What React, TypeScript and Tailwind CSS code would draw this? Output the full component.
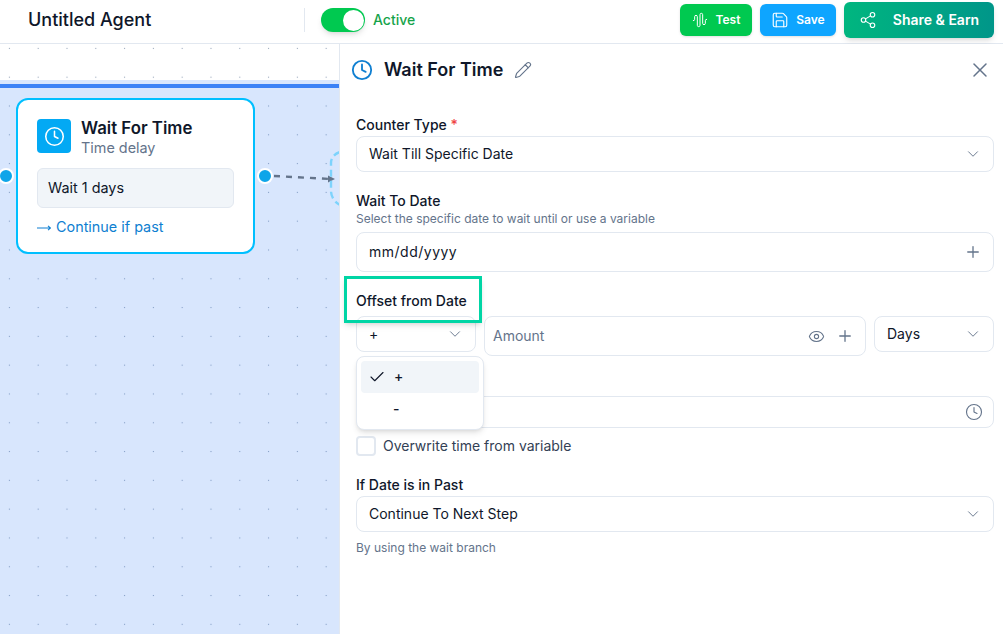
import {AudioWaveform, Check, ChevronDown, Clock, Eye, Pencil, Plus, Save, Share2, X} from "lucide-react";

function SelectBox({value, className = ""}: {value: string; className?: string}) {
  return (
    <div className={`flex h-9 items-center justify-between rounded-lg border border-[#e2e8f0] bg-white pl-3 pr-[11px] text-sm text-[#0f172a] ${className}`}>
      <span>{value}</span>
      <ChevronDown size={18} strokeWidth={1.25} className="text-[#64748b]"/>
    </div>
  )
}

function Header() {
  return (
    <header className="flex h-11 shrink-0 items-center border-b border-[#e2e8f0] bg-white pb-[3px] pl-7 pr-[9px]">
      <h1 className="w-[276px] text-lg font-medium text-[#0f172a]">Untitled Agent</h1>
      <div className="h-6 w-px bg-[#e2e8f0]"/>
      <div className="ml-4 flex h-6 w-11 items-center justify-end rounded-full bg-[#00c950] pr-px shadow-md">
        <div className="size-[21px] rounded-full bg-white"/>
      </div>
      <span className="ml-2 text-sm font-medium text-[#16a34a]">Active</span>
      <div className="ml-auto flex items-center gap-2">
        <button className="flex h-8 w-[72px] items-center justify-center gap-2 rounded-md bg-[#00c950] text-xs font-semibold text-white shadow-sm">
          <AudioWaveform size={16} strokeWidth={1.5}/>
          Test
        </button>
        <button className="flex h-8 w-[76px] items-center justify-center gap-[7px] rounded-md bg-[#0ea5ff] text-xs font-semibold text-white shadow-sm">
          <Save size={18} strokeWidth={1.5}/>
          Save
        </button>
        <button className="flex h-9 w-[150px] items-center justify-center gap-4 rounded-md bg-gradient-to-r from-[#00b67f] to-[#009689] text-sm font-semibold text-white shadow-md">
          <Share2 size={18} strokeWidth={1.5}/>
          Share &amp; Earn
        </button>
      </div>
    </header>
  )
}

function Handle({className}: {className: string}) {
  return <div className={`absolute size-4 rounded-full border-2 border-white bg-[#0ea5e9] ${className}`}/>
}

function Canvas() {
  return (
    <section className="relative w-[340px] shrink-0 overflow-hidden border-r border-[#e2e8f0] bg-white bg-[radial-gradient(circle,#94a3b8_0.8px,transparent_1px)] bg-[size:28.8px_28.8px] bg-[position:-5px_-10px]">
      <div className="mt-9 h-full bg-[#3b82f6]/20 pt-1">
        <div className="h-1 bg-[#3b82f6]"/>
        <div className="relative ml-4 mt-[10px] h-[156px] w-[239px] rounded-xl border-2 border-[#00bfff] bg-white px-[19px] pt-[19px]">
          <div className="flex h-[34px] items-center gap-[10px]">
            <div className="flex size-[34px] items-center justify-center rounded bg-[#03a9f4] text-white">
              <Clock size={21} strokeWidth={1.75}/>
            </div>
            <div className="mt-[3px]">
              <div className="text-[16.8px] leading-5 font-semibold text-[#0f172a]">Wait For Time</div>
              <div className="text-[14.4px] leading-5 text-[#64748b]">Time delay</div>
            </div>
          </div>
          <div className="mt-[15px] flex h-10 items-center rounded-md border border-[#e2e8f0] bg-[#f1f5f9] px-[10px] text-[14.4px] text-[#0f172a]">
            Wait 1 days
          </div>
          <div className="mt-[9px] flex items-center text-[14.4px] leading-5 text-[#0f7fd1]">
            <svg width="14" height="8" viewBox="0 0 14 8" fill="none" stroke="currentColor" strokeWidth="1.1" className="mr-[5px] mt-px">
              <path d="M0 4H13.5M11 1.8L13.5 4L11 6.2"/>
            </svg>
            Continue if past
          </div>
          <Handle className="left-[-20px] top-[68px]"/>
          <Handle className="right-[-20px] top-[68px]"/>
        </div>
      </div>
      <svg className="absolute left-[270px] top-[105px]" width="70" height="60" viewBox="0 0 70 60" fill="none">
        <path d="M4 27 L60 30" stroke="#64748b" strokeWidth="2.4" strokeDasharray="6 6"/>
        <path d="M65 30 L58 26.5 V33.5 Z" fill="#64748b"/>
        <path d="M70 3 C64 5 61 9 61 14 V42 C61 47 64 53 70 56" stroke="#7dd3fc" strokeWidth="2.4" strokeDasharray="7 4"/>
      </svg>
    </section>
  )
}

function FieldLabel({children}: {children: React.ReactNode}) {
  return <label className="block text-sm leading-5 font-medium text-[#0f172a]">{children}</label>
}

function Panel() {
  return (
    <section className="relative flex-1 bg-white pl-4 pr-[9px]">
      <div className="-ml-[5px] flex h-[51px] items-center">
        <Clock size={22} strokeWidth={2} className="text-[#0f7fd1]"/>
        <h2 className="ml-[11px] text-lg font-semibold text-[#0f172a]">Wait For Time</h2>
        <Pencil size={18} strokeWidth={1.5} className="ml-[11px] text-[#64748b]"/>
        <X size={24} strokeWidth={1.5} className="ml-auto mr-[2px] text-[#64748b]"/>
      </div>

      <div className="mt-5">
        <FieldLabel>Counter Type <span className="text-[#ef4444]">*</span></FieldLabel>
        <SelectBox value="Wait Till Specific Date" className="mt-[1px]"/>
      </div>

      <div className="mt-[19px]">
        <FieldLabel>Wait To Date</FieldLabel>
        <p className="text-xs leading-4 text-[#64748b]">Select the specific date to wait until or use a variable</p>
        <div className="mt-[5px] flex h-10 items-center justify-between rounded-lg border border-[#e2e8f0] pl-3 pr-[11px] text-sm tracking-[0.5px] text-[#0f172a]">
          mm/dd/yyyy
          <Plus size={18} strokeWidth={1.75} className="text-[#64748b]"/>
        </div>
      </div>

      <div className="mt-[19px]">
        <FieldLabel>Offset from Date</FieldLabel>
        <div className="relative mt-[5px] flex items-start gap-2">
          <SelectBox value="+" className="w-[120px]"/>
          <div className="flex h-10 flex-1 items-center rounded-lg border border-[#e2e8f0] pl-2 pr-[11px] text-sm text-[#64748b]">
            Amount
            <Eye size={17} strokeWidth={1.5} className="ml-auto"/>
            <Plus size={18} strokeWidth={1.75} className="ml-[11px]"/>
          </div>
          <SelectBox value="Days" className="w-[120px]"/>
          <div className="absolute left-0 top-10 z-10 w-[128px] rounded-lg border border-[#e2e8f0] bg-white p-1 text-sm font-medium text-[#0f172a] shadow-md">
            <div className="flex h-8 items-center rounded bg-[#f1f5f9] pl-[7px]">
              <Check size={18} strokeWidth={1.5}/>
              <span className="ml-2">+</span>
            </div>
            <div className="flex h-8 items-center pl-8">-</div>
          </div>
        </div>
      </div>

      <div className="mt-10 flex h-8 items-center justify-end rounded-lg border border-[#e2e8f0] pr-[10px]">
        <Clock size={18} strokeWidth={1.5} className="text-[#64748b]"/>
      </div>

      <label className="mt-2 flex items-center gap-[7px] text-sm text-[#334155]">
        <span className="size-5 rounded border-2 border-[#e2e8f0]"/>
        Overwrite time from variable
      </label>

      <div className="mt-[19px]">
        <FieldLabel>If Date is in Past</FieldLabel>
        <SelectBox value="Continue To Next Step" className="mt-[1px]"/>
        <p className="mt-2 text-xs leading-4 text-[#64748b]">By using the wait branch</p>
      </div>
    </section>
  )
}

export default function App() {
  return (
    <div className="relative flex h-[634px] w-[1003px] flex-col overflow-hidden bg-white font-['Inter',sans-serif]">
      <Header/>
      <main className="flex min-h-0 flex-1">
        <Canvas/>
        <Panel/>
      </main>
      {/* tour highlight over the offset label */}
      <div className="pointer-events-none absolute left-[344px] top-[276px] z-20 h-[47px] w-[138px] border-[3px] border-[#00d5a5] shadow-md"/>
    </div>
  )
}
